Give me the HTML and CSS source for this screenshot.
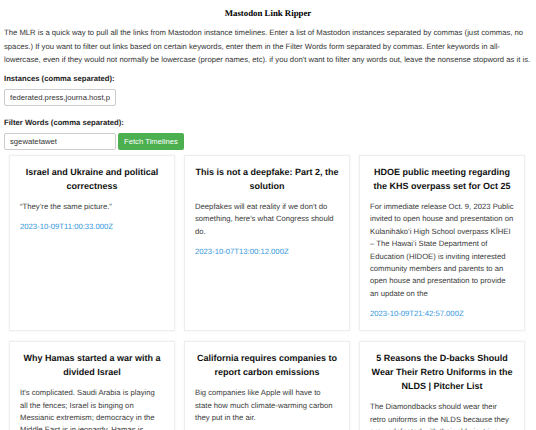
FILE: index.html
```html
<!DOCTYPE html>
<html lang="en">
<head>
  <meta charset="UTF-8">
  <meta name="viewport" content="width=device-width, initial-scale=1.0">
  <title>Mastodon Link Ripper</title>
  <link rel="stylesheet" href="styles.css">
</head>
<body>

  <h1>Mastodon Link Ripper</h1>
  <p class="intro">The MLR is a quick way to pull all the links from Mastodon instance timelines. Enter a list of Mastodon instances separated by commas (just commas, no spaces.) If you want to filter out links based on certain keywords, enter them in the Filter Words form separated by commas. Enter keywords in all-lowercase, even if they would not normally be lowercase (proper names, etc). if you don't want to filter any words out, leave the nonsense stopword as it is.</p>

  <label for="instances">Instances (comma separated):</label>
  <div class="row">
    <input type="text" id="instances" value="federated.press,journa.host,post.news">
  </div>

  <label for="filterWords">Filter Words (comma separated):</label>
  <div class="row">
    <input type="text" id="filterWords" value="sgewatetawet">
    <button id="fetchBtn">Fetch Timelines</button>
  </div>

  <div id="results" class="results">
    <div class="card">
      <h3>Israel and Ukraine and political correctness</h3>
      <p>“They’re the same picture.”</p>
      <a href="#">2023-10-09T11:00:33.000Z</a>
    </div>
    <div class="card">
      <h3>This is not a deepfake: Part 2, the solution</h3>
      <p>Deepfakes will eat reality if we don't do something, here's what Congress should do.</p>
      <a href="#">2023-10-07T13:00:12.000Z</a>
    </div>
    <div class="card">
      <h3>HDOE public meeting regarding the KHS overpass set for Oct 25</h3>
      <p>For immediate release Oct. 9, 2023 Public invited to open house and presentation on Kūlanihākoʻi High School overpass KĪHEI – The Hawaiʻi State Department of Education (HIDOE) is inviting interested community members and parents to an open house and presentation to provide an update on the</p>
      <a href="#">2023-10-09T21:42:57.000Z</a>
    </div>
    <div class="card">
      <h3>Why Hamas started a war with a divided Israel</h3>
      <p>It's complicated. Saudi Arabia is playing all the fences; Israel is binging on Messianic extremism; democracy in the Middle East is in jeopardy. Hamas is exploiting all of it.</p>
      <a href="#">2023-10-09T12:30:00.000Z</a>
    </div>
    <div class="card">
      <h3>California requires companies to report carbon emissions</h3>
      <p>Big companies like Apple will have to state how much climate-warming carbon they put in the air.</p>
      <a href="#">2023-10-08T17:15:04.000Z</a>
    </div>
    <div class="card">
      <h3>5 Reasons the D-backs Should Wear Their Retro Uniforms in the NLDS | Pitcher List</h3>
      <p>The Diamondbacks should wear their retro uniforms in the NLDS because they are undefeated with their old pinstripes on.</p>
      <a href="#">2023-10-07T15:20:41.000Z</a>
    </div>
  </div>

</body>
</html>
```

FILE: styles.css
```css
/* Page */
body {
  font-family: 'Liberation Sans', Arial, sans-serif;
  color: #333;
  background-color: #fff;
  margin: 0;
  padding: 4px;
  text-rendering: geometricPrecision;
}

h1 {
  font-family: 'Liberation Serif', 'Times New Roman', serif;
  font-size: 8.8px;
  line-height: 12px;
  text-align: center;
  color: #000;
  margin: 3px 0 0;
}

.intro {
  font-size: 7.7px;
  line-height: 13.5px;
  margin: 7px 0 0;
}

label {
  display: block;
  font-size: 7.7px;
  line-height: 10px;
  font-weight: bold;
  color: #222;
  margin-top: 12px;
}

.intro + label {
  margin-top: 7.5px;
}

/* Form row */
.row {
  display: flex;
  gap: 2px;
  margin-top: 5px;
}

input[type="text"] {
  width: 112px;
  height: 17px;
  box-sizing: border-box;
  padding: 0 5px;
  border: 1px solid #ccc;
  border-radius: 2px;
  font-family: inherit;
  font-size: 7.7px;
  color: #333;
}

button {
  height: 17px;
  padding: 0 6px;
  border: none;
  border-radius: 2px;
  background-color: #4caf50;
  color: #fff;
  font-family: inherit;
  font-size: 7.7px;
  cursor: pointer;
}

button:hover {
  background-color: #45a049;
}

/* Results */
.results {
  display: grid;
  grid-template-columns: repeat(3, 166px);
  gap: 10px 9px;
  margin-top: 5px;
  padding-left: 5px;
}

.card {
  border: 1px solid #eee;
  box-shadow: 0 0 2px rgba(0, 0, 0, 0.06);
  background-color: #fff;
  padding: 9px 10px 10px;
}

.card h3 {
  font-size: 9px;
  line-height: 14px;
  text-align: center;
  color: #111;
  margin: 0;
}

.card p {
  font-size: 7.7px;
  line-height: 12.4px;
  color: #3a3a3a;
  margin: 8px 0 7.5px;
}

.card a {
  display: block;
  font-size: 7.7px;
  line-height: 12.4px;
  color: #3498db;
  text-decoration: none;
}
```
